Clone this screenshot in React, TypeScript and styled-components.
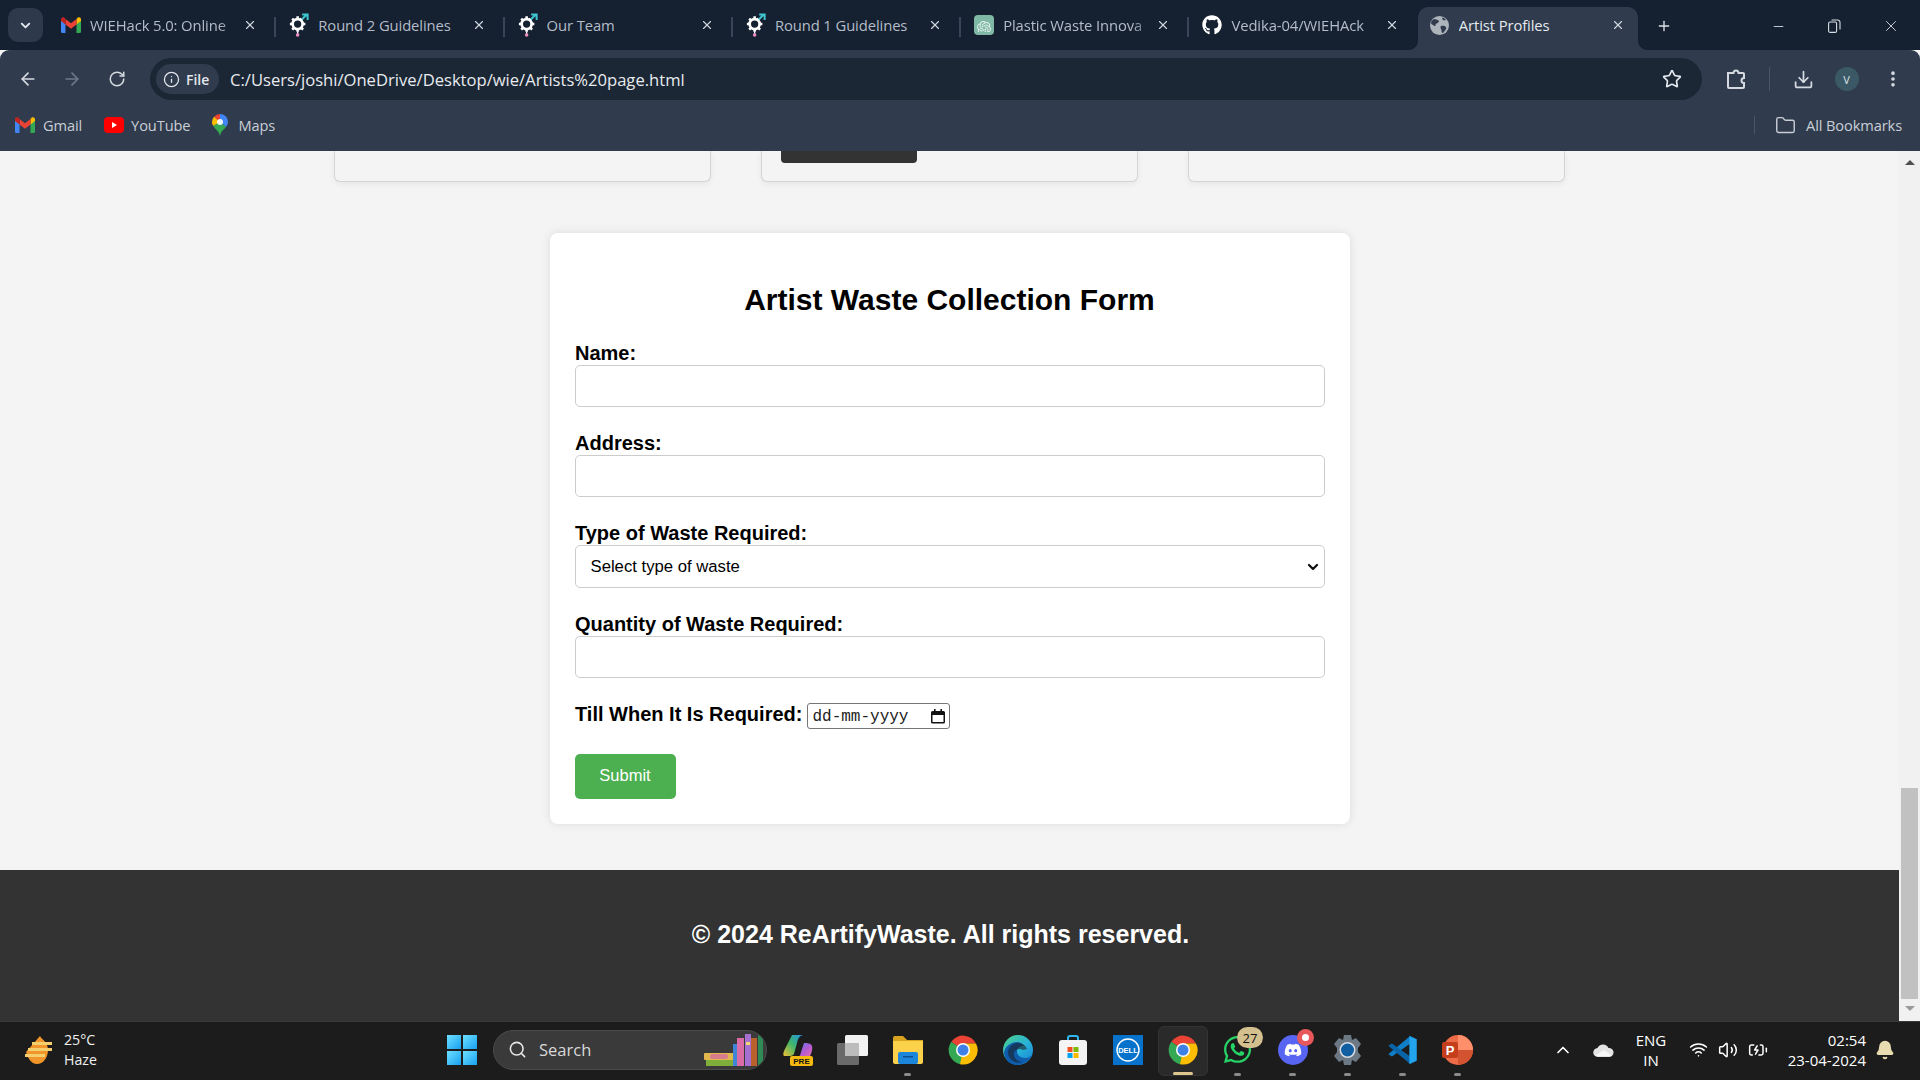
import React from "react";
import styled, { createGlobalStyle } from "styled-components";
import {
  ArrowLeft, ArrowRight, RotateCw, Info, Star, Download, MoreVertical,
  ChevronDown, ChevronUp, Plus, X, Minus, Search, Wifi, Volume2, BatteryCharging, Bell, Folder,
} from "lucide-react";
import { FaGithub, FaWhatsapp, FaDiscord } from "react-icons/fa";
import { SiOpenai } from "react-icons/si";

const GlobalStyle = createGlobalStyle`
  html, body { margin: 0; padding: 0; height: 100%; overflow: hidden; background: #f4f4f4; }
  * { box-sizing: border-box; }
  #root { height: 100%; }
`;

const UI_FONT = `"Open Sans", "Noto Sans", "Liberation Sans", sans-serif`;
const PAGE_FONT = `"Liberation Sans", Arial, sans-serif`;

const Screen = styled.div`
  width: 1920px; height: 1080px; display: flex; flex-direction: column; overflow: hidden;
`;

/* ---------- browser chrome ---------- */
const TabStrip = styled.div`
  height: 50px; background: #152030; display: flex; align-items: flex-end; padding-left: 8px; font-family: ${UI_FONT};
`;
const TabListButton = styled.button`
  width: 35px; height: 34px; margin: 0 5px 8px 0; border: 0; border-radius: 10px; background: #2e3a4b; color: #e4e8ee;
  display: flex; align-items: center; justify-content: center; padding: 0;
`;
const Tab = styled.div<{ $active?: boolean; $sep?: boolean }>`
  position: relative; flex: none; height: 43px; display: flex; align-items: center;
  width: ${(p) => (p.$active ? "220px" : "228.3px")};
  padding: 0 ${(p) => (p.$active ? "13px" : "19px")} 7px ${(p) => (p.$active ? "12px" : "13px")};
  background: ${(p) => (p.$active ? "#303c4d" : "transparent")};
  border-radius: 10px 10px 0 0;
  color: ${(p) => (p.$active ? "#e6eaf0" : "#b4bcc8")};
  &::before {
    content: ""; position: absolute; right: 0; top: 10px; height: 20px; width: 2px; background: #3a4657;
    display: ${(p) => (p.$sep ? "block" : "none")};
  }
  ${(p) => p.$active && `
    &::after {
      content: ""; position: absolute; bottom: 0; right: -10px; width: 10px; height: 10px;
      background: radial-gradient(circle at 100% 0, transparent 10px, #303c4d 10.5px);
    }
  `}
`;
const ActiveFlare = styled.span`
  position: absolute; bottom: 0; left: -10px; width: 10px; height: 10px;
  background: radial-gradient(circle at 0 0, transparent 10px, #303c4d 10.5px);
`;
const TabIconSlot = styled.span`
  width: 20px; height: 24px; flex: none; margin-right: 9px; display: flex; align-items: center; justify-content: center; color: #fff;
`;
const TabTitle = styled.span`
  flex: 1; min-width: 0; white-space: nowrap; overflow: hidden; font-size: 14.8px; font-weight: 500; letter-spacing: -0.1px;
`;
const FadedTabTitle = styled(TabTitle)`
  mask-image: linear-gradient(to right, #000 calc(100% - 18px), rgba(0, 0, 0, 0.25));
`;
const TabClose = styled.span`
  flex: none; width: 14px; height: 14px; margin-left: 6px; display: flex; align-items: center; justify-content: center; color: #cfd5dd;
`;
const NewTab = styled.span`
  flex: none; margin: 0 0 16px 18px; width: 16px; height: 16px; display: flex; color: #dfe4ea;
`;
const WindowButtons = styled.div`
  margin: 0 0 15px auto; display: flex; align-items: center; color: #d8dde4;
`;
const WinButton = styled.span<{ $w: number }>`
  width: ${(p) => p.$w}px; display: flex; justify-content: center; align-items: center;
`;

const Toolbar = styled.div`
  height: 58px; background: #303c4d; border-radius: 9px 9px 0 0; display: flex; align-items: flex-start; padding: 8px 0 0 0;
  color: #c9cfd8; font-family: ${UI_FONT};
`;
const NavIcon = styled.span<{ $dim?: boolean; $w: number }>`
  width: ${(p) => p.$w}px; height: 42px; flex: none; display: flex; align-items: center; justify-content: center;
  color: ${(p) => (p.$dim ? "#6f7987" : "#d5dae1")};
`;
const AddressBar = styled.div`
  width: 1552px; height: 42px; margin-left: 5px; flex: none; background: #1b2734; border-radius: 21px; display: flex; align-items: center; padding: 0 20px 0 6px;
`;
const FileChip = styled.div`
  width: 63px; height: 30px; flex: none; background: #303c4d; border-radius: 15px; display: flex; align-items: center; padding-left: 7px; gap: 6px;
  color: #e2e6eb; font-size: 14px; font-weight: 600;
`;
const Url = styled.span`
  margin-left: 11px; font-size: 16.6px; color: #e8ebef; white-space: nowrap;
`;
const AddressEnd = styled.span`
  margin-left: auto; display: flex; color: #e4e8ee;
`;
const ToolDivider = styled.span`
  width: 1px; height: 24px; margin-top: 9px; background: #4a5667; flex: none;
`;
const Avatar = styled.span`
  width: 24px; height: 24px; flex: none; border-radius: 50%; background: #3b5866; color: #d8e2e6; font-size: 11px; display: flex; align-items: center; justify-content: center;
`;

const BookmarkBar = styled.div`
  height: 43px; background: #303c4d; display: flex; align-items: center; padding: 0 0 9px 15px; color: #c9ced6; font-family: ${UI_FONT}; font-size: 14.6px; font-weight: 500; letter-spacing: -0.1px;
`;
const Bookmark = styled.span<{ $ml?: number; $gap: number }>`
  display: flex; align-items: center; gap: ${(p) => p.$gap}px; margin-left: ${(p) => p.$ml || 0}px;
`;
const BookmarkDivider = styled.span`
  width: 1px; height: 18px; background: #4a5667; margin: 0 20px 0 auto;
`;
const AllBookmarks = styled.span`
  display: flex; align-items: center; gap: 10px; margin-right: 18px; white-space: nowrap;
`;

/* ---------- page ---------- */
const Viewport = styled.div`
  flex: 1; min-height: 0; display: flex; background: #f4f4f4;
`;
const Page = styled.div`
  flex: 1; min-width: 0; display: flex; flex-direction: column; font-family: ${PAGE_FONT}; overflow: hidden;
`;
const CardRow = styled.div`
  height: 31px; flex: none; display: flex; justify-content: center; gap: 50px; margin-bottom: 51px;
`;
const ArtistCard = styled.div`
  width: 377px; height: 31px; border: 1px solid #d4d4d4; border-top: 0; border-radius: 0 0 6px 6px; background: #f4f4f4;
  box-shadow: 0 2px 6px rgba(0, 0, 0, 0.06); padding-left: 19px;
`;
const ContactButton = styled.div`
  width: 136px; height: 12px; background: #333; border-radius: 0 0 4px 4px;
`;
const FormCard = styled.form`
  width: 800px; align-self: center; flex: none; background: #fff; border-radius: 8px; padding: 25px; box-shadow: 0 0 10px rgba(0, 0, 0, 0.1); margin-bottom: 46px;
`;
const FormTitle = styled.h2`
  margin: 25px 0 25px; text-align: center; font-size: 30px; line-height: 34px; font-weight: 700; color: #000;
`;
const Field = styled.div`
  margin-bottom: 25px;
`;
const FieldLabel = styled.label`
  display: block; font-size: 20px; line-height: 23px; font-weight: 700; color: #000; padding-left: 0.500px;
`;
const TextInput = styled.input`
  display: block; width: 100%; height: 42px; border: 1px solid #ccc; border-radius: 5px; background: #fff; padding: 10px; font-size: 16px; font-family: ${PAGE_FONT}; outline: none;
`;
const SelectWrap = styled.div`
  position: relative;
`;
const SelectInput = styled.select`
  display: block; width: 100%; height: 43px; border: 1px solid #ccc; border-radius: 5px; background: #fff; padding: 0 30px 0 15px; font-size: 16.700px; font-family: ${PAGE_FONT}; color: #000; outline: none;
  appearance: none;
`;
const SelectArrow = styled.span`
  position: absolute; right: 4px; top: 14px; display: flex; pointer-events: none; color: #111;
`;
const DateRow = styled.div`
  display: flex; align-items: center; gap: 5px; margin-bottom: 25px; height: 26px;
`;
const InlineLabel = styled(FieldLabel)`
  display: block; margin-top: -3px;
`;
const DateBox = styled.div`
  width: 143px; height: 26px; border: 1px solid #767676; border-radius: 3px; display: flex; align-items: center; padding: 1px 4px 0 4px; background: #fff;
`;
const DateText = styled.input`
  width: 112px; border: 0; padding: 0; outline: none; background: transparent; font-family: "Liberation Mono", monospace; font-size: 16px; color: #000;
  &::placeholder { color: #222; opacity: 1; }
`;
const CalendarBox = styled.span`
  margin-left: auto; display: flex;
`;
const SubmitButton = styled.button`
  display: block; width: 101px; height: 45px; border: 0; border-radius: 5px; background: #4caf50; color: #fff; font-family: ${PAGE_FONT}; font-size: 16.500px; padding: 0 0 2px;
`;
const Footer = styled.footer`
  flex: 1; background: #333; color: #fff; text-align: center; font-size: 25px; line-height: 30px; font-weight: 700; padding: 49px 18px 0 0;
`;
const Scrollbar = styled.div`
  width: 21px; flex: none; background: #f1f1f1; display: flex; flex-direction: column; align-items: center; padding-top: 9px;
`;
const ScrollArrow = styled.span<{ $down?: boolean }>`
  width: 0; height: 0; border-left: 5px solid transparent; border-right: 5px solid transparent;
  ${(p) => (p.$down ? "border-top: 5px solid #9a9a9a;" : "border-bottom: 5px solid #505050;")}
`;
const ScrollThumb = styled.div`
  width: 17px; height: 211px; background: #c1c1c1; margin: auto 0 7px;
`;
const ScrollEnd = styled.div`
  height: 10px; flex: none;
`;

/* ---------- taskbar ---------- */
const Taskbar = styled.div`
  height: 59px; flex: none; background: #1c1c1c; border-top: 1px solid #3a3a3a; display: flex; align-items: center; font-family: ${UI_FONT}; color: #f0f0f0; position: relative;
`;
const Weather = styled.div`
  width: 434px; flex: none; display: flex; align-items: center; padding: 0 0 3px 25px; gap: 9px;
`;
const TwoLines = styled.div<{ $center?: boolean; $right?: boolean; $size: number }>`
  display: flex; flex-direction: column; font-size: ${(p) => p.$size}px; line-height: 20px; white-space: nowrap;
  align-items: ${(p) => (p.$center ? "center" : p.$right ? "flex-end" : "flex-start")};
`;
const Slot = styled.div`
  position: relative; width: 55px; height: 50px; flex: none; display: flex; align-items: center; justify-content: center;
`;
const ActiveBox = styled.span`
  position: absolute; left: 3px; right: 2px; top: 0; bottom: 0; background: #2a2a2a; border: 1px solid #333; border-radius: 6px;
`;
const Running = styled.span<{ $active?: boolean }>`
  position: absolute; left: 50%; bottom: ${(p) => (p.$active ? "1px" : "0")}; height: 3px; border-radius: 2px;
  width: ${(p) => (p.$active ? "20px" : "7px")}; margin-left: ${(p) => (p.$active ? "-10px" : "-3.5px")};
  background: ${(p) => (p.$active ? "#dcc68e" : "#8b8b8b")};
`;
const AppIcon = styled.span`
  position: relative; display: flex; z-index: 1; margin-bottom: 3px;
`;
const CountBadge = styled.span`
  position: absolute; top: -7px; right: -10px; width: 26px; height: 21px; border-radius: 11px; background: #d4c08e; color: #111; font-size: 13px; display: flex; align-items: center; justify-content: center;
`;
const DotBadge = styled.span`
  position: absolute; top: -6px; right: -6px; width: 17px; height: 17px; border-radius: 50%; background: #e8585a; display: flex; align-items: center; justify-content: center;
  &::after { content: ""; width: 7px; height: 7px; border-radius: 50%; background: #fff; }
`;
const SearchPill = styled.div`
  width: 274px; height: 40px; flex: none; margin: 0 3px 3px 4px; border-radius: 20px; background: #3a3a3a; border: 1px solid #4a4a4a; display: flex; align-items: center; padding-left: 14px; gap: 12px; font-size: 16.500px; color: #d8d8d8; overflow: hidden;
`;
const BooksBox = styled.span`
  margin-left: auto; display: flex;
`;
const WinLogo = styled.span`
  display: grid; grid-template-columns: 14px 14px; grid-template-rows: 14px 14px; gap: 2px;
`;
const WinPane = styled.span`
  background: linear-gradient(135deg, #6ee0ff, #17a0ef);
`;
const Tray = styled.div`
  margin-left: auto; display: flex; align-items: center; margin-bottom: 3px; padding-right: 16px;
`;
const TrayIcon = styled.span<{ $w: number; $end?: boolean }>`
  width: ${(p) => p.$w}px; flex: none; display: flex; justify-content: ${(p) => (p.$end ? "flex-end" : "center")}; color: #fff;
`;

/* ---------- drawn icons ---------- */
const GmailIcon = () => (
  <svg width="20" height="16" viewBox="0 0 20 16">
    <path d="M0 3v11.5A1.5 1.5 0 0 0 1.500 16H4.500V7z" fill="#4285f4" />
    <path d="M20 3v11.500a1.500 1.500 0 0 1-1.500 1.500H15.500V7z" fill="#34a853" />
    <path d="M15.500 2v5.500L20 4V2.500C20 .6 18 -.4 16.500 .7z" fill="#fbbc04" />
    <path d="M4.500 7.500V2L10 6.200 15.500 2v5.500L10 11.700z" fill="#ea4335" />
    <path d="M0 2.500V4l4.500 3.500V2L3.500 .7C2 -.4 0 .6 0 2.500z" fill="#c5221f" />
  </svg>
);
const YoutubeIcon = () => (
  <svg width="20" height="16" viewBox="0 0 20 16">
    <rect width="20" height="16" rx="4" fill="#f00" />
    <path d="M8 5l5 3-5 3z" fill="#fff" />
  </svg>
);
const MapsIcon = () => (
  <svg width="16" height="22" viewBox="0 0 16 22">
    <path d="M8 0a8 8 0 0 1 8 8c0 2-1 3.500-2 5L8 8z" fill="#4285f4" />
    <path d="M8 0a8 8 0 0 0-6 2.700L8 8z" fill="#ea4335" />
    <path d="M2 2.700A8 8 0 0 0 0 8c0 1.500.5 2.800 1.300 4L8 8z" fill="#fbbc04" />
    <path d="M1.300 12C3 15 7 17 8 22c1-5 4-6.500 6-9L8 8z" fill="#34a853" />
    <circle cx="8" cy="8" r="3" fill="#fff" opacity=".9" />
  </svg>
);
const GearIcon = () => (
  <svg width="22" height="26" viewBox="0 0 22 26">
    <path d="M13 8l6-6M14.500 1.500H20.500V7.500" stroke="#3fc5d0" strokeWidth="2.200" fill="none" />
    <circle cx="9.500" cy="12" r="5.500" fill="none" stroke="#fff" strokeWidth="3" />
    <path d="M9.500 3.500v3M9.500 17.500v3M1 12h3M15 12h3M3.500 6l2 2M13.500 16l2 2M3.500 18l2-2M13.500 6l-1 1" stroke="#fff" strokeWidth="2.800" />
    <path d="M9.500 20v3" stroke="#fff" strokeWidth="1.500" />
    <circle cx="9.500" cy="24" r="2" fill="#f08bc0" />
  </svg>
);
const OpenAiTile = () => (
  <svg width="20" height="20" viewBox="0 0 20 20">
    <rect width="20" height="20" rx="4" fill="#7fb8a4" />
    <foreignObject x="3" y="3" width="14" height="14"><SiOpenai size={14} color="#e6f3ee" /></foreignObject>
  </svg>
);
const GlobeIcon = () => (
  <svg width="19" height="19" viewBox="0 0 19 19">
    <circle cx="9.500" cy="9.500" r="9.500" fill="#aeb4bc" />
    <path d="M4 3c2 0 3 1 4.500 1.500S8 7 6.500 7.500 6 11 4.500 10 1 8 1 7s1-3 3-4zM11 10c2-.5 4 0 5 1s-1 4-3 6c-1 .5-1.500-1-1.500-2.500S9.500 11 11 10zM12 1.500c1.500 0 3 1 4 2.500-1.500.5-3 .5-3.500-.5z" fill="#303c4d" />
  </svg>
);
const RestoreIcon = () => (
  <svg width="13" height="14" viewBox="0 0 13 14" fill="none" stroke="currentColor" strokeWidth="1.100">
    <rect x=".6" y="3" width="8" height="10.400" rx="1.500" />
    <path d="M3.500 1h6A2.500 2.500 0 0 1 12 3.500v7" />
  </svg>
);
const ExtensionIcon = () => (
  <svg width="22" height="24" viewBox="0 0 22 24" fill="none" stroke="currentColor" strokeWidth="2">
    <path d="M3 6h5.500a2.500 2.500 0 0 1 5 0H18a1 1 0 0 1 1 1v4a2.500 2.500 0 0 0 0 5v4a1 1 0 0 1-1 1H4a1 1 0 0 1-1-1z" />
  </svg>
);
const CalendarIcon = () => (
  <svg width="14" height="15" viewBox="0 0 14 15">
    <path d="M1.500 2H12.500A1.500 1.500 0 0 1 14 3.500V13A1.500 1.500 0 0 1 12.500 14.500H1.500A1.500 1.500 0 0 1 0 13V3.500A1.500 1.500 0 0 1 1.500 2zM1.500 6V13H12.500V6z" fill="#111" fillRule="evenodd" />
    <rect x="3" y="0" width="1.600" height="3" fill="#111" /><rect x="9.400" y="0" width="1.600" height="3" fill="#111" />
  </svg>
);
const ChromeIcon = () => (
  <svg width="30" height="30" viewBox="0 0 30 30">
    <path d="M15 15L3.300 6.700A14.500 14.500 0 0 1 28 8.500H15z" fill="#ea4335" />
    <path d="M15 15L3.300 6.700A14.500 14.500 0 0 0 12 29.200L18 20z" fill="#34a853" />
    <path d="M15 15V8.500H28A14.500 14.500 0 0 1 12 29.200z" fill="#fbbc04" />
    <circle cx="15" cy="15" r="7" fill="#fff" />
    <circle cx="15" cy="15" r="5.500" fill="#3f80e6" />
  </svg>
);
const WeatherIcon = () => (
  <svg width="30" height="28" viewBox="0 0 30 28">
    <path d="M15 0c2 4 8 6 8 14s-5 14-11 14S3 22 1 16z" fill="#f0962a" />
    <path d="M7 6h20v3H7zM3 12h24v3H3zM0 18h20v3H0z" fill="#f5cf6e" />
  </svg>
);
const BooksIcon = () => (
  <svg width="62" height="36" viewBox="0 0 62 36">
    <rect x="0" y="21" width="30" height="7" rx="1" fill="#e2b84e" /><rect x="6" y="22" width="18" height="5" rx="2" fill="#d77d8c" />
    <rect x="2" y="28" width="28" height="6" fill="#7fae3a" />
    <rect x="29" y="12" width="4" height="22" fill="#3f86d6" />
    <rect x="33" y="6" width="7" height="28" fill="#d96ba6" />
    <rect x="41" y="2" width="6" height="32" fill="#a46fd1" /><rect x="42" y="10" width="4" height="3" fill="#f3d66d" />
    <rect x="47" y="6" width="6" height="28" fill="#b9602c" />
    <rect x="54" y="3" width="5" height="31" fill="#2f8a55" />
  </svg>
);
const CopilotIcon = () => (
  <svg width="30" height="32" viewBox="0 0 30 32">
    <defs>
      <linearGradient id="cpA" x1="0" y1="1" x2="1" y2="0"><stop offset="0" stopColor="#f1c232" /><stop offset=".5" stopColor="#3fb56b" /><stop offset="1" stopColor="#1e90e8" /></linearGradient>
      <linearGradient id="cpB" x1="0" y1="0" x2="1" y2="1"><stop offset="0" stopColor="#3f8de8" /><stop offset=".5" stopColor="#b05ad6" /><stop offset="1" stopColor="#ef6fa0" /></linearGradient>
    </defs>
    <path d="M9 1h11c-4 1-5 4-6 8l-3 11c-1 1-2 2-4 2H2C0 22 0 20 1 17z" fill="url(#cpA)" />
    <path d="M21 9c3 0 7 0 8 3s-1 9-3 12c-1 1-3 1-5 1H12c4-1 5-3 6-7z" fill="url(#cpB)" />
    <rect x="7" y="22" width="23" height="10" rx="2" fill="#f5b90f" />
    <text x="18.500" y="30" textAnchor="middle" fontSize="8" fontWeight="700" fontFamily="Liberation Sans" fill="#111">PRE</text>
  </svg>
);
const TaskViewIcon = () => (
  <svg width="32" height="30" viewBox="0 0 32 30">
    <rect x="0" y="8" width="22" height="22" rx="1.500" fill="#6a6a6a" />
    <rect x="8" y="0" width="23" height="21" rx="1.500" fill="#f2f2f2" />
    <rect x="8" y="8" width="14" height="13" fill="#bdbdbd" />
  </svg>
);
const ExplorerIcon = () => (
  <svg width="30" height="28" viewBox="0 0 30 28">
    <path d="M0 2a2 2 0 0 1 2-2h8l4 4h16v4H0z" fill="#d9a21f" />
    <path d="M0 5h30v21a2 2 0 0 1-2 2H2a2 2 0 0 1-2-2z" fill="#fbd24a" />
    <rect x="5" y="16" width="20" height="12" rx="2" fill="#1b86dc" /><rect x="10" y="20" width="10" height="1.500" fill="#0b4f8f" />
  </svg>
);
const EdgeIcon = () => (
  <svg width="30" height="30" viewBox="0 0 30 30">
    <defs>
      <linearGradient id="edA" x1="0" y1="0" x2="1" y2="1"><stop offset="0" stopColor="#4fd18a" /><stop offset=".55" stopColor="#27b0d8" /><stop offset="1" stopColor="#1a7fd6" /></linearGradient>
    </defs>
    <circle cx="15" cy="15" r="15" fill="url(#edA)" />
    <path d="M30 17c-1 4-4 6-8 6-5 0-8-3-8-7 0-3 3-5 7-5-1-2-4-4-7-4C8 7 2 11 1 18c1 7 6 12 13 12 8 0 14-6 16-13z" fill="#0e5cab" />
    <path d="M20 15c-3-2-8-1-9 3s3 9 8 9c-5 2-13-1-14-9 0-6 5-10 10-10s8 3 9 6z" fill="#1c1c1c" opacity=".55" />
  </svg>
);
const StoreIcon = () => (
  <svg width="30" height="30" viewBox="0 0 30 30">
    <path d="M10 6V3a2 2 0 0 1 2-2h6a2 2 0 0 1 2 2v3" fill="none" stroke="#2fb6f0" strokeWidth="2" />
    <rect x="1" y="5" width="28" height="25" rx="3" fill="#f4f4f4" />
    <rect x="9.500" y="12" width="5" height="5" fill="#f25022" /><rect x="15.500" y="12" width="5" height="5" fill="#7fba00" />
    <rect x="9.500" y="18" width="5" height="5" fill="#00a4ef" /><rect x="15.500" y="18" width="5" height="5" fill="#ffb900" />
  </svg>
);
const DellIcon = () => (
  <svg width="30" height="30" viewBox="0 0 30 30">
    <rect width="30" height="30" fill="#0672cb" />
    <circle cx="15" cy="15" r="11" fill="none" stroke="#fff" strokeWidth="1.400" />
    <text x="15" y="18" textAnchor="middle" fontSize="7.500" fontWeight="700" fontFamily="Liberation Sans" fill="#fff">DELL</text>
  </svg>
);
const DiscordIcon = () => (
  <svg width="30" height="30" viewBox="0 0 30 30">
    <circle cx="15" cy="15" r="15" fill="#5865f2" />
    <foreignObject x="6" y="6" width="18" height="18"><FaDiscord size={18} color="#fff" /></foreignObject>
  </svg>
);
const SettingsIcon = () => (
  <svg width="31" height="30" viewBox="0 0 31 30">
    <path d="M12 0h7l1 5 4-2 5 6-3 4v4l3 4-5 6-4-2-1 5h-7l-1-5-4 2-5-6 3-4v-4L2 9l5-6 4 2z" fill="#6d7885" />
    <circle cx="15.500" cy="15" r="8" fill="#d7dbe0" />
    <circle cx="15.500" cy="15" r="6.500" fill="#115ea3" />
  </svg>
);
const VsCodeIcon = () => (
  <svg width="31" height="32" viewBox="0 0 100 100">
    <polygon points="74,6 74,30 16,71 4,64" fill="#0f7fc9" />
    <polygon points="74,94 74,70 16,29 4,36" fill="#0a65a8" />
    <polygon points="72,4 96,15 96,85 72,96" fill="#22a5ee" />
  </svg>
);
const PowerPointIcon = () => (
  <svg width="31" height="30" viewBox="0 0 31 30">
    <circle cx="16" cy="15" r="15" fill="#ed6c47" />
    <path d="M16 0a15 15 0 0 1 15 15H16z" fill="#ff8f6b" />
    <path d="M16 15h15a15 15 0 0 1-15 15z" fill="#d35230" />
    <rect x="0" y="7" width="16" height="16" rx="2" fill="#c43e1c" />
    <text x="8" y="20" textAnchor="middle" fontSize="13" fontWeight="700" fontFamily="Liberation Sans" fill="#fff">P</text>
  </svg>
);
const CloudIcon = () => (
  <svg width="21" height="14" viewBox="0 0 21 14">
    <path d="M5 14a4.500 4.500 0 0 1-.5-9A6 6 0 0 1 15.500 5 4.500 4.500 0 0 1 16.500 14z" fill="#e4e4e4" />
    <path d="M2 13l9-6 8 6z" fill="#f8f8f8" />
  </svg>
);

const tabs = [
  { title: "WIEHack 5.0: Online", icon: <GmailIcon />, faded: true },
  { title: "Round 2 Guidelines", icon: <GearIcon /> },
  { title: "Our Team", icon: <GearIcon /> },
  { title: "Round 1 Guidelines", icon: <GearIcon /> },
  { title: "Plastic Waste Innova", icon: <OpenAiTile />, faded: true },
  { title: "Vedika-04/WIEHAck", icon: <FaGithub size={20} color="#fff" />, faded: true },
];

const apps: { icon: React.ReactNode; running?: boolean; active?: boolean; badge?: React.ReactNode }[] = [
  { icon: <ExplorerIcon />, running: true },
  { icon: <ChromeIcon /> },
  { icon: <EdgeIcon /> },
  { icon: <StoreIcon /> },
  { icon: <DellIcon /> },
  { icon: <ChromeIcon />, running: true, active: true },
  { icon: <FaWhatsapp size={31} color="#25d366" />, running: true, badge: <CountBadge>27</CountBadge> },
  { icon: <DiscordIcon />, running: true, badge: <DotBadge /> },
  { icon: <SettingsIcon />, running: true },
  { icon: <VsCodeIcon />, running: true },
  { icon: <PowerPointIcon />, running: true },
];

export default function App() {
  return (
    <Screen>
      <GlobalStyle />
      <TabStrip>
        <TabListButton><ChevronDown size={15} strokeWidth={3} /></TabListButton>
        {tabs.map((t, i) => (
          <Tab key={t.title} $sep={i < 5}>
            <TabIconSlot>{t.icon}</TabIconSlot>
            {t.faded ? <FadedTabTitle>{t.title}</FadedTabTitle> : <TabTitle>{t.title}</TabTitle>}
            <TabClose><X size={14} strokeWidth={2} /></TabClose>
          </Tab>
        ))}
        <Tab $active>
          <ActiveFlare />
          <TabIconSlot><GlobeIcon /></TabIconSlot>
          <TabTitle>Artist Profiles</TabTitle>
          <TabClose><X size={14} strokeWidth={2} /></TabClose>
        </Tab>
        <NewTab><Plus size={16} strokeWidth={2} /></NewTab>
        <WindowButtons>
          <WinButton $w={56}><Minus size={15} strokeWidth={1.4} /></WinButton>
          <WinButton $w={56}><RestoreIcon /></WinButton>
          <WinButton $w={58}><X size={18} strokeWidth={1.2} /></WinButton>
        </WindowButtons>
      </TabStrip>

      <Toolbar>
        <NavIcon $w={55}><ArrowLeft size={20} strokeWidth={2} /></NavIcon>
        <NavIcon $w={34} $dim><ArrowRight size={20} strokeWidth={2} /></NavIcon>
        <NavIcon $w={56}><RotateCw size={18} strokeWidth={2} /></NavIcon>
        <AddressBar>
          <FileChip><Info size={17} strokeWidth={1.8} />File</FileChip>
          <Url>C:/Users/joshi/OneDrive/Desktop/wie/Artists%20page.html</Url>
          <AddressEnd><Star size={20} strokeWidth={2} /></AddressEnd>
        </AddressBar>
        <NavIcon $w={67}><ExtensionIcon /></NavIcon>
        <ToolDivider />
        <NavIcon $w={66}><Download size={21} strokeWidth={2} /></NavIcon>
        <NavIcon $w={21}><Avatar>V</Avatar></NavIcon>
        <NavIcon $w={71}><MoreVertical size={20} strokeWidth={2.4} /></NavIcon>
      </Toolbar>

      <BookmarkBar>
        <Bookmark $gap={8}><GmailIcon />Gmail</Bookmark>
        <Bookmark $ml={22} $gap={7}><YoutubeIcon />YouTube</Bookmark>
        <Bookmark $ml={22} $gap={10}><MapsIcon />Maps</Bookmark>
        <BookmarkDivider />
        <AllBookmarks><Folder size={21} strokeWidth={1.6} />All Bookmarks</AllBookmarks>
      </BookmarkBar>

      <Viewport>
        <Page>
          <CardRow>
            <ArtistCard />
            <ArtistCard><ContactButton /></ArtistCard>
            <ArtistCard />
          </CardRow>
          <FormCard onSubmit={(e) => e.preventDefault()}>
            <FormTitle>Artist Waste Collection Form</FormTitle>
            <Field>
              <FieldLabel htmlFor="name">Name:</FieldLabel>
              <TextInput id="name" type="text" />
            </Field>
            <Field>
              <FieldLabel htmlFor="address">Address:</FieldLabel>
              <TextInput id="address" type="text" />
            </Field>
            <Field>
              <FieldLabel htmlFor="type">Type of Waste Required:</FieldLabel>
              <SelectWrap>
                <SelectInput id="type" defaultValue="">
                  <option value="">Select type of waste</option>
                  <option value="plastic">Plastic</option>
                  <option value="metal">Metal</option>
                </SelectInput>
                <SelectArrow><ChevronDown size={16} strokeWidth={3.4} /></SelectArrow>
              </SelectWrap>
            </Field>
            <Field>
              <FieldLabel htmlFor="qty">Quantity of Waste Required:</FieldLabel>
              <TextInput id="qty" type="text" />
            </Field>
            <DateRow>
              <InlineLabel htmlFor="till">Till When It Is Required:</InlineLabel>
              <DateBox>
                <DateText id="till" type="text" placeholder="dd-mm-yyyy" />
                <CalendarBox><CalendarIcon /></CalendarBox>
              </DateBox>
            </DateRow>
            <SubmitButton type="submit">Submit</SubmitButton>
          </FormCard>
          <Footer>© 2024 ReArtifyWaste. All rights reserved.</Footer>
        </Page>
        <Scrollbar>
          <ScrollArrow />
          <ScrollThumb />
          <ScrollArrow $down />
          <ScrollEnd />
        </Scrollbar>
      </Viewport>

      <Taskbar>
        <Weather>
          <WeatherIcon />
          <TwoLines $size={14.200}><span>25°C</span><span>Haze</span></TwoLines>
        </Weather>
        <Slot><AppIcon><WinLogo><WinPane /><WinPane /><WinPane /><WinPane /></WinLogo></AppIcon></Slot>
        <SearchPill>
          <Search size={19} strokeWidth={2} color="#e8e8e8" />
          Search
          <BooksBox><BooksIcon /></BooksBox>
        </SearchPill>
        <Slot><AppIcon><CopilotIcon /></AppIcon></Slot>
        <Slot><AppIcon><TaskViewIcon /></AppIcon></Slot>
        {apps.map((a, i) => (
          <Slot key={i}>
            {a.active && <ActiveBox />}
            <AppIcon>{a.icon}{a.badge}</AppIcon>
            {a.running && <Running $active={a.active} />}
          </Slot>
        ))}
        <Tray>
          <TrayIcon $w={38}><ChevronUp size={20} strokeWidth={2} /></TrayIcon>
          <TrayIcon $w={42}><CloudIcon /></TrayIcon>
          <TrayIcon $w={54}><TwoLines $center $size={15}><span>ENG</span><span>IN</span></TwoLines></TrayIcon>
          <TrayIcon $w={40}><Wifi size={19} strokeWidth={2} /></TrayIcon>
          <TrayIcon $w={20}><Volume2 size={20} strokeWidth={1.8} /></TrayIcon>
          <TrayIcon $w={40}><BatteryCharging size={20} strokeWidth={1.8} /></TrayIcon>
          <TrayIcon $w={88} $end><TwoLines $right $size={15}><span>02:54</span><span>23-04-2024</span></TwoLines></TrayIcon>
          <TrayIcon $w={38}><Bell size={20} strokeWidth={2} fill="#e9dcb0" color="#e9dcb0" /></TrayIcon>
        </Tray>
      </Taskbar>
    </Screen>
  );
}
